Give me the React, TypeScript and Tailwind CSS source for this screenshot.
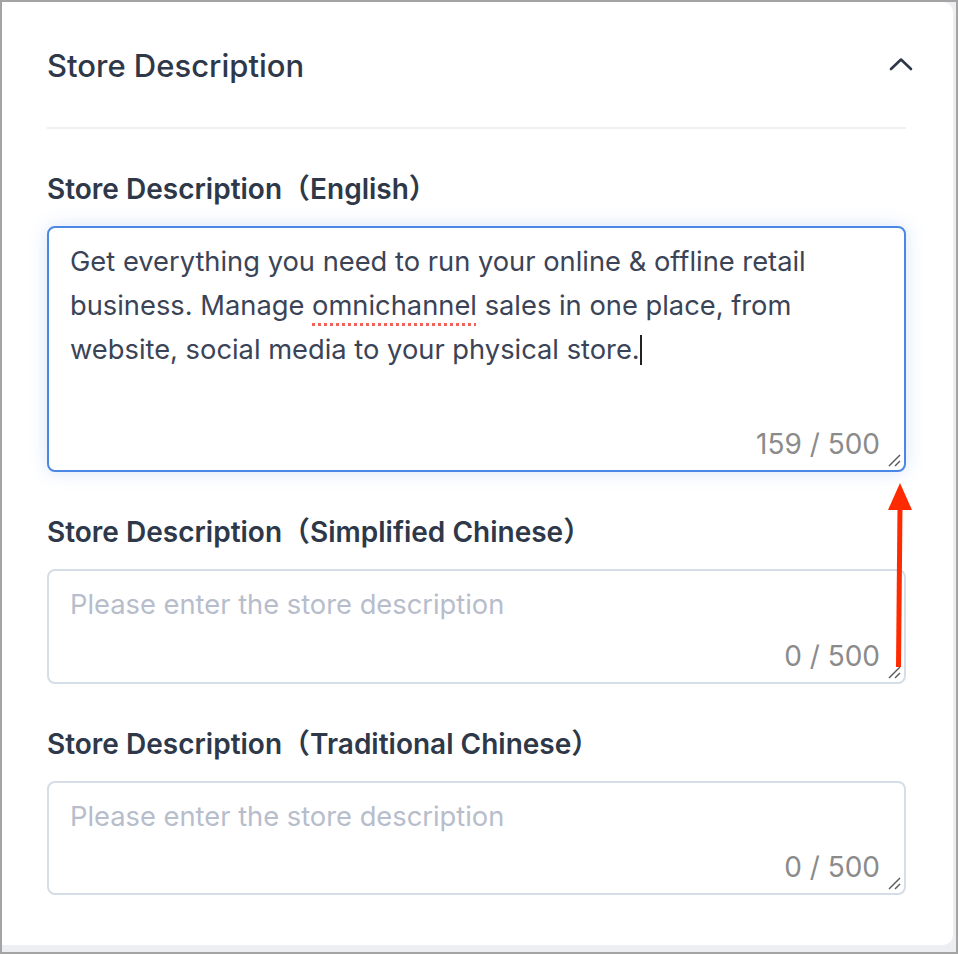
const font = { fontFamily: 'Inter, "Noto Sans CJK SC", sans-serif' };

function ResizeGrip() {
  return (
    <svg className="absolute bottom-[3px] right-[3px]" width="14" height="14" viewBox="0 0 14 14">
      <line x1="2" y1="13" x2="13" y2="2" stroke="#5a5a5a" strokeWidth="1.5" />
      <line x1="8" y1="13" x2="13" y2="8" stroke="#5a5a5a" strokeWidth="1.5" />
    </svg>
  );
}

interface FieldProps {
  label: string;
  lang: string;
  value?: string[];
  focused?: boolean;
  height: string;
}

function DescriptionField({ label, lang, value, focused, height }: FieldProps) {
  const count = value ? value.join(' ').length : 0;
  return (
    <div className="flex flex-col gap-[19px]">
      <div className="text-[28px] leading-[36px] font-semibold text-[#2e3849]">
        {label}（{lang}）
      </div>
      <div
        className={
          focused
            ? `relative ${height} rounded-[8px] border-2 border-[#4b88e4] bg-white shadow-[0_0_18px_rgba(75,136,228,0.22)] pl-[21px] pr-[24px] pt-[12px]`
            : `relative ${height} rounded-[8px] border-2 border-[#d5dde7] bg-white pl-[21px] pr-[24px] pt-[12px]`
        }
      >
        {value ? (
          <div className="text-[27.3px] leading-[44px] text-[#3b4456]">
            <div>{value[0]}</div>
            <div>
              business. Manage{' '}
              <span className="underline decoration-dotted decoration-[#f0625a] decoration-[3px] underline-offset-[8px]">
                omnichannel
              </span>{' '}
              sales in one place, from
            </div>
            <div>
              {value[2]}
              <span className="inline-block w-[2px] h-[30px] bg-[#222] align-middle -mt-[4px]" />
            </div>
          </div>
        ) : (
          <div className="text-[27.3px] leading-[44px] text-[#b7bdcb]">Please enter the store description</div>
        )}
        <div className="absolute right-[24px] bottom-[9px] text-[28px] leading-[34px] text-[#8b8b8b]">
          {count} / 500
        </div>
        <ResizeGrip />
      </div>
    </div>
  );
}

export default function App() {
  const english = [
    'Get everything you need to run your online & offline retail',
    'business. Manage omnichannel sales in one place, from',
    'website, social media to your physical store.',
  ];

  return (
    <div style={font} className="relative w-[958px] h-[954px] border-2 border-[#a4a4a4] bg-[#eceef1] overflow-hidden">
      <div className="mr-[3px] h-[943px] rounded-r-[10px] bg-white pl-[45px] pr-[47px]">
        <div className="flex h-[125px] items-center justify-between">
          <h2 className="text-[31px] font-medium text-[#2e3849] mt-[3px]">Store Description</h2>
          <svg width="26" height="18" viewBox="0 0 26 18" className="mr-[-8px]">
            <polyline points="3,13 13,3.5 23,13" fill="none" stroke="#2e3849" strokeWidth="2.6" strokeLinecap="round" strokeLinejoin="round" />
          </svg>
        </div>
        <div className="h-[2px] bg-[#efefef]" />
        <div className="flex flex-col gap-[42px] pt-[42px]">
          <DescriptionField label="Store Description" lang="English" value={english} focused height="h-[246px]" />
          <DescriptionField label="Store Description" lang="Simplified Chinese" height="h-[115px]" />
          <DescriptionField label="Store Description" lang="Traditional Chinese" height="h-[114px]" />
        </div>
      </div>
      {/* annotation arrow */}
      <svg className="absolute left-[882px] top-[476px]" width="30" height="194" viewBox="0 0 30 194">
        <polygon points="16,5 4,32 28,32" fill="#ff2a00" />
        <line x1="16" y1="28" x2="14.5" y2="189" stroke="#ff2a00" strokeWidth="5" />
      </svg>
    </div>
  );
}
